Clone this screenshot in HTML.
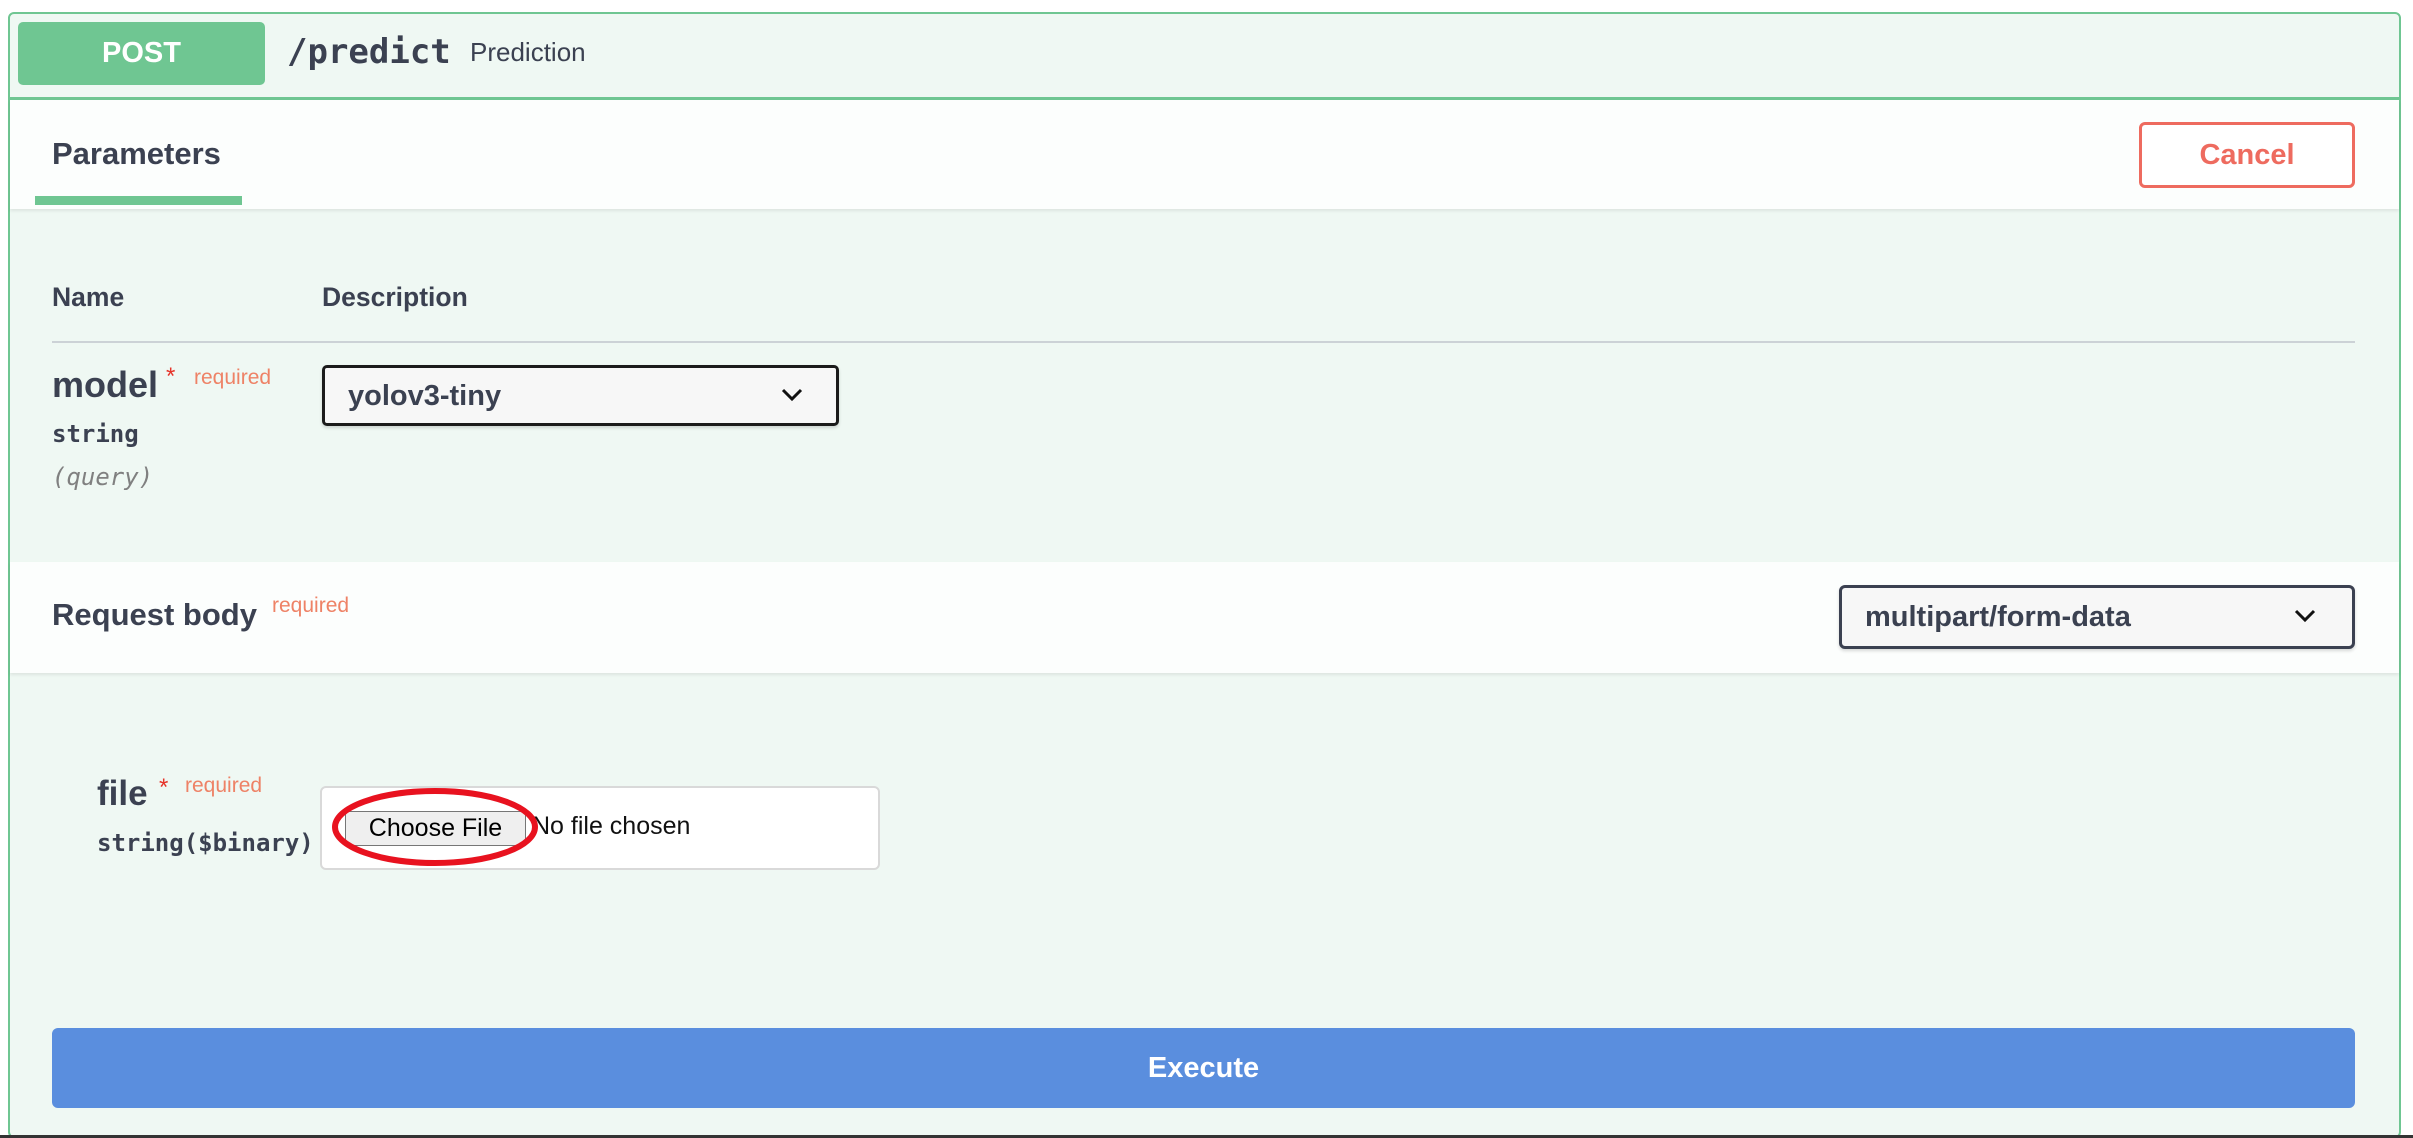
<!DOCTYPE html>
<html style="overflow:hidden;width:2413px;height:1138px"><head><meta charset="utf-8"><style>
*{box-sizing:border-box;margin:0;padding:0}
body{width:2413px;height:1138px;background:#fff;font-family:"Liberation Sans",sans-serif;color:#3b4151;position:relative;overflow:hidden}
.a{position:absolute}
.mono{font-family:"DejaVu Sans Mono","Liberation Mono",monospace}
</style></head><body>
<div class="a" style="left:8px;top:12px;width:2393px;height:1126px;border:2px solid #6fc692;border-radius:6px;background:#eff8f3"></div>
<div class="a" style="left:18px;top:22px;width:247px;height:63px;background:#6fc692;border-radius:5px;color:#fff;font-weight:bold;font-size:29px;text-align:center;line-height:63px">POST</div>
<div class="a mono" style="left:287px;top:32px;font-size:34px;font-weight:bold;color:#3b4151">/predict</div>
<div class="a" style="left:470px;top:37px;font-size:26px;color:#3b4151">Prediction</div>
<div class="a" style="left:10px;top:97px;width:2389px;height:3px;background:#6fc692"></div>
<div class="a" style="left:10px;top:100px;width:2389px;height:109px;background:#fcfefd;box-shadow:0 2px 3px rgba(0,0,0,.08)"></div>
<div class="a" style="left:52px;top:136px;font-size:31px;font-weight:bold">Parameters</div>
<div class="a" style="left:35px;top:196px;width:207px;height:9px;background:#6fc692"></div>
<div class="a" style="left:2139px;top:122px;width:216px;height:66px;border:3px solid #ee6b5f;border-radius:6px;background:#fff;color:#ee6b5f;font-weight:bold;font-size:29px;text-align:center;line-height:60px">Cancel</div>
<div class="a" style="left:52px;top:282px;font-size:26.5px;font-weight:bold">Name</div>
<div class="a" style="left:322px;top:282px;font-size:26.5px;font-weight:bold">Description</div>
<div class="a" style="left:52px;top:341px;width:2303px;height:2px;background:#ccd2d6"></div>
<div class="a" style="left:52px;top:364px;font-size:36px;font-weight:bold">model</div>
<div class="a" style="left:166px;top:363px;font-size:24px;color:#e6342a">*</div>
<div class="a" style="left:194px;top:366px;font-size:21px;color:#ee8266">required</div>
<div class="a mono" style="left:52px;top:420px;font-size:24px;font-weight:bold">string</div>
<div class="a mono" style="left:52px;top:463px;font-size:24px;font-style:italic;color:#808080">(query)</div>
<div class="a" style="left:322px;top:365px;width:517px;height:61px;border:3px solid #1b1b1b;border-radius:5px;background:#f7f7f7;box-shadow:0 2px 3px rgba(0,0,0,.15)"></div>
<div class="a" style="left:348px;top:380px;font-size:29px;font-weight:bold">yolov3-tiny</div>
<svg class="a" style="left:780px;top:387px" width="24" height="16" viewBox="0 0 24 16"><path d="M3 3l9 9 9-9" fill="none" stroke="#111" stroke-width="3"/></svg>
<div class="a" style="left:10px;top:562px;width:2389px;height:111px;background:#fcfefd;box-shadow:0 2px 3px rgba(0,0,0,.08)"></div>
<div class="a" style="left:52px;top:597px;font-size:31px;font-weight:bold">Request body</div>
<div class="a" style="left:272px;top:594px;font-size:21px;color:#ee8266">required</div>
<div class="a" style="left:1839px;top:585px;width:516px;height:64px;border:3px solid #3b4151;border-radius:6px;background:#f7f7f7;box-shadow:0 2px 3px rgba(0,0,0,.15)"></div>
<div class="a" style="left:1865px;top:601px;font-size:29px;font-weight:bold">multipart/form-data</div>
<svg class="a" style="left:2293px;top:608px" width="24" height="16" viewBox="0 0 24 16"><path d="M3 3l9 9 9-9" fill="none" stroke="#111" stroke-width="3"/></svg>
<div class="a" style="left:97px;top:774px;font-size:35px;font-weight:bold">file</div>
<div class="a" style="left:159px;top:774px;font-size:24px;color:#e6342a">*</div>
<div class="a" style="left:185px;top:774px;font-size:21px;color:#ee8266">required</div>
<div class="a mono" style="left:97px;top:829px;font-size:24px;font-weight:bold">string($binary)</div>
<div class="a" style="left:320px;top:786px;width:560px;height:84px;border:2px solid #d9d9d9;border-radius:6px;background:#fff"></div>
<div class="a" style="left:345px;top:811px;width:181px;height:35px;border:1px solid #767676;border-radius:3px;background:#efefef;font-size:25px;color:#000;text-align:center;line-height:33px">Choose File</div>
<div class="a" style="left:532px;top:812px;font-size:25px;color:#111">No file chosen</div>
<svg class="a" style="left:330px;top:784px" width="210" height="86"><ellipse cx="105" cy="43" rx="100" ry="36" fill="none" stroke="#e8121f" stroke-width="6"/></svg>
<div class="a" style="left:52px;top:1028px;width:2303px;height:80px;background:#5a8ede;border-radius:6px;color:#fff;font-weight:bold;font-size:29px;text-align:center;line-height:80px">Execute</div>
<div class="a" style="left:0;top:1135px;width:2413px;height:3px;background:#333"></div>
</body></html>
